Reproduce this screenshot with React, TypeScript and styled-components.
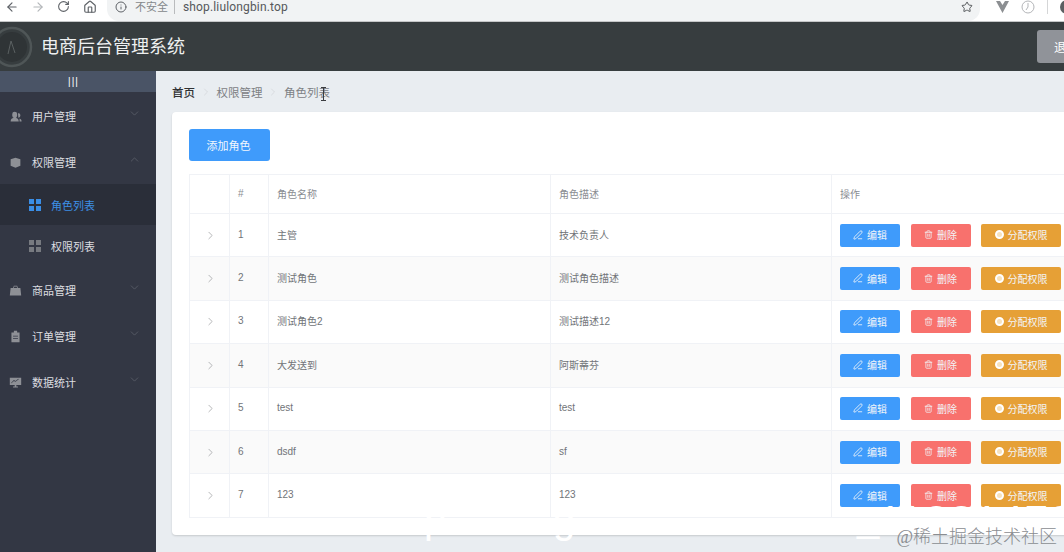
import styled, { createGlobalStyle } from 'styled-components';
import {
  ArrowLeft,
  ArrowRight,
  ChevronDown,
  ChevronRight,
  ChevronUp,
  Home,
  Info,
  PenLine,
  RotateCw,
  Star,
  Trash2,
} from 'lucide-react';

const GlobalStyle = createGlobalStyle`
  html, body {
    margin: 0;
    padding: 0;
    background: #e9edf1;
  }
  body {
    font-family: "Liberation Sans", "Noto Sans CJK SC", sans-serif;
  }
`;

const Page = styled.div`
  position: relative;
  display: flex;
  flex-direction: column;
  width: 1064px;
  height: 552px;
  overflow: hidden;
`;

/* browser chrome */
const ChromeBar = styled.div`
  display: flex;
  align-items: flex-start;
  flex: 0 0 22px;
  box-sizing: border-box;
  padding-left: 5px;
  background: #fff;
  border-bottom: 1px solid #c4c6c7;
  color: #5f6368;
`;
const NavButton = styled.span<{ $muted?: boolean }>`
  display: flex;
  flex: none;
  width: 26px;
  color: ${p => (p.$muted ? '#b4b7ba' : '#5f6368')};
`;
const Omnibox = styled.div`
  display: flex;
  flex: none;
  align-items: center;
  width: 873px;
  height: 21px;
  margin-left: -2px;
  padding: 0 7px 7px 8px;
  box-sizing: border-box;
  background: #f1f3f4;
  border-radius: 0 0 12px 12px;
  font-size: 12px;
`;
const Insecure = styled.span`
  margin-left: 8px;
  padding-right: 6px;
  border-right: 1px solid #b9bbbd;
  color: #85888b;
  font-size: 11px;
  line-height: 14px;
`;
const Address = styled.span`
  margin-left: 8px;
  color: #55585b;
  font-family: "Roboto", "Liberation Sans", sans-serif;
  font-size: 12px;
  letter-spacing: 0.15px;
`;
const StarSlot = styled.span`
  display: flex;
  margin-left: auto;
  color: #55585b;
`;
const Extensions = styled.div`
  display: flex;
  flex: none;
  align-items: center;
  gap: 12px;
  height: 14px;
  margin-left: 16px;
`;
const Divider = styled.span`
  width: 1px;
  height: 14px;
  background: #d5d6d7;
`;
const Avatar = styled.span`
  width: 14px;
  height: 14px;
  border-radius: 50%;
  background: #5c5f62;
`;

/* app header */
const Header = styled.header`
  display: flex;
  align-items: center;
  flex: 0 0 49px;
  background: #373d3f;
`;
const Logo = styled.svg`
  flex: none;
`;
const Title = styled.h1`
  margin: 0 0 0 8px;
  color: #eef0f0;
  font-size: 18px;
  font-weight: 400;
  line-height: 24px;
`;
const LogoutButton = styled.button`
  width: 60px;
  height: 33px;
  margin: 0 -33px 0 auto;
  padding: 0 0 0 17px;
  border: 0;
  border-radius: 3px;
  background: #909399;
  color: #fff;
  font: inherit;
  font-size: 12px;
  text-align: left;
  white-space: nowrap;
`;

const Body = styled.div`
  display: flex;
  flex: 1;
  min-height: 0;
`;

/* sidebar */
const Sidebar = styled.aside`
  flex: 0 0 156px;
  background: #333744;
`;
const Toggle = styled.div`
  height: 21px;
  padding-right: 9px;
  background: #4a5466;
  color: #fff;
  font-size: 10px;
  line-height: 21px;
  letter-spacing: 1px;
  text-align: center;
`;
const MenuList = styled.nav`
  padding-top: 1px;
`;
const MenuRow = styled.div`
  display: flex;
  align-items: center;
  height: 46px;
  padding-left: 9px;
  color: #dcdde0;
  font-size: 11px;
`;
const MenuIcon = styled.svg`
  flex: none;
  margin-right: 10px;
  fill: #8e9096;
`;
const Caret = styled.span`
  display: flex;
  margin: -5px 0 0 auto;
  padding-right: 15px;
  color: #70737c;
`;
const SubList = styled.div`
  margin: -1px 0 1px;
`;
const SubRow = styled.div<{ $active?: boolean }>`
  display: flex;
  align-items: center;
  height: 41px;
  padding-left: 29px;
  background: ${p => (p.$active ? '#2a2e39' : 'transparent')};
  color: ${p => (p.$active ? '#3d8fe6' : '#dcdde0')};
  font-size: 11px;
`;
const SubIcon = styled.span<{ $active?: boolean }>`
  display: grid;
  grid-template-columns: 5px 5px;
  gap: 2px;
  margin-right: 10px;
  i {
    height: 5px;
    background: ${p => (p.$active ? '#3a8ee6' : '#777a80')};
  }
`;

/* main area */
const Main = styled.main`
  flex: 1;
  min-width: 0;
  padding: 0 0 0 16px;
`;
const Breadcrumb = styled.div`
  display: flex;
  align-items: center;
  height: 41px;
  padding-top: 1px;
  box-sizing: border-box;
  color: #7b7e82;
  font-size: 11.5px;
`;
const Crumb = styled.span<{ $strong?: boolean }>`
  color: ${p => (p.$strong ? '#303133' : '#7d8084')};
  font-weight: ${p => (p.$strong ? 500 : 400)};
`;
const CrumbSep = styled.span`
  display: flex;
  margin: 0 4.75px;
  color: #c6c8cc;
`;
const Card = styled.section`
  width: 940px;
  height: 423px;
  padding: 17px 0 0 17px;
  box-sizing: border-box;
  background: #fff;
  border-radius: 4px;
  box-shadow: 0 1px 2px rgba(0, 0, 0, 0.15);
`;
const PrimaryButton = styled.button`
  display: block;
  width: 81px;
  height: 32px;
  padding: 0 2px 1px 0;
  border: 0;
  border-radius: 3px;
  background: #3f9bfb;
  color: #f2f7fd;
  font: inherit;
  font-size: 11px;
`;
const Table = styled.table`
  width: 920px;
  margin-top: 13px;
  border: 1px solid #ebeef5;
  border-collapse: collapse;
  table-layout: fixed;
  color: #717478;
  font-size: 10px;
`;
const HeadRow = styled.tr`
  height: 39px;
  color: #8a8d92;
`;
const Row = styled.tr<{ $striped: boolean }>`
  height: 43.4px;
  background: ${p => (p.$striped ? '#fafafa' : '#fff')};
`;
const Cell = styled.td`
  padding: 0 8px 2px;
  border: 1px solid #f0f2f6;
  font-weight: 400;
  text-align: left;
`;
const HeadCell = styled(Cell).attrs({ as: 'th' })``;
const ExpandCell = styled(Cell)`
  padding: 0 0 0 14px;
  color: #85878b;
  svg {
    display: block;
  }
`;
const ActionCell = styled(Cell)`
  padding: 0 8px;
`;
const Actions = styled.div`
  display: flex;
  gap: 10.5px;
`;
const ActionButton = styled.button<{ $color: string; $wide?: boolean }>`
  display: flex;
  align-items: center;
  justify-content: center;
  gap: 4px;
  width: ${p => (p.$wide ? 80 : 60)}px;
  height: 23px;
  padding: 0 0 1px;
  border: 0;
  border-radius: 2px;
  background: ${p => p.$color};
  color: #f2f5f9;
  font: inherit;
  font-size: 10px;
`;
const Gear = styled.span`
  width: 5px;
  height: 5px;
  border: 2px solid #fff;
  border-radius: 50%;
  background: #f7e2bd;
`;

/* things burnt into the recording: cursor, big caption, watermark */
const TextCursor = styled.svg`
  position: absolute;
  left: 321px;
  top: 87px;
`;
const GhostLetter = styled.span<{ $left: number; $top: number }>`
  position: absolute;
  left: ${p => p.$left}px;
  top: ${p => p.$top}px;
  color: #fff;
  font-family: "Liberation Sans", sans-serif;
  font-size: 40px;
  line-height: 40px;
`;
const GhostDigits = styled.div`
  position: absolute;
  left: 878px;
  top: 504px;
  width: 186px;
  height: 12px;
  overflow: hidden;
  color: #fff;
  font-family: "Liberation Sans", sans-serif;
  font-size: 42px;
  line-height: 34px;
  letter-spacing: 1.6px;
  white-space: nowrap;
`;
const Watermark = styled.div`
  position: absolute;
  right: 7px;
  bottom: 3px;
  color: #8a8d91;
  font-family: "Liberation Serif", "Noto Sans CJK SC", serif;
  font-size: 18px;
  font-weight: 300;
  line-height: 24px;
  white-space: nowrap;
`;

const IconBox = ({ d }: { d: string }) => (
  <MenuIcon width="13" height="13" viewBox="0 0 16 16">
    <path d={d} />
  </MenuIcon>
);

const menuIcons = {
  user: 'M7 2a3 3 0 0 1 3 3v2a3 3 0 0 1-6 0V5a3 3 0 0 1 3-3zM2 14c0-3 2-4 3.500-4.500h3C10 10 12 11 12 14zM11 4a2.500 2.500 0 0 1 3 2.500c0 1.500-1 3-2.500 3zM13 10.500c1.500.5 2.500 1.500 2.500 3.500H13z',
  box: 'M8 2l6 2v8l-6 2.500L2 12V4zM2 5.500l6 2 6-2v1l-6 2-6-2z',
  bag: 'M6 2h4l1 3h3l1 9H1l1-9h3zM6.500 3.200L6 5h4l-.5-1.800z',
  clipboard: 'M6 1h4v2h3v12H3V3h3zM5 7v1h6V7zm0 3v1h6v-1z',
  chart: 'M1 2h14v9H9v2h2v1H5v-1h2v-2H1zm2 7l3-3 2 1 4-3-.5-.5L8 6 6 5 2.500 8.500z',
};

const roles = [
  ['1', '主管', '技术负责人'],
  ['2', '测试角色', '测试角色描述'],
  ['3', '测试角色2', '测试描述12'],
  ['4', '大发送到', '阿斯蒂芬'],
  ['5', 'test', 'test'],
  ['6', 'dsdf', 'sf'],
  ['7', '123', '123'],
];

const MenuItem = ({ icon, label, open }: { icon: string; label: string; open?: boolean }) => (
  <MenuRow>
    <IconBox d={icon} />
    {label}
    <Caret>{open ? <ChevronUp size={13} strokeWidth={1} /> : <ChevronDown size={13} strokeWidth={1} />}</Caret>
  </MenuRow>
);

const SubItem = ({ label, active }: { label: string; active?: boolean }) => (
  <SubRow $active={active}>
    <SubIcon $active={active}>
      <i />
      <i />
      <i />
      <i />
    </SubIcon>
    {label}
  </SubRow>
);

export default function App() {
  return (
    <Page>
      <GlobalStyle />
      <ChromeBar>
        <NavButton>
          <ArrowLeft size={14} />
        </NavButton>
        <NavButton $muted>
          <ArrowRight size={14} />
        </NavButton>
        <NavButton>
          <RotateCw size={13} />
        </NavButton>
        <NavButton>
          <Home size={14} />
        </NavButton>
        <Omnibox>
          <Info size={12} />
          <Insecure>不安全</Insecure>
          <Address>shop.liulongbin.top</Address>
          <StarSlot>
            <Star size={12} />
          </StarSlot>
        </Omnibox>
        <Extensions>
          <svg width="13" height="12" viewBox="0 0 13 12">
            <path d="M0 0h4l2.500 4L9 0h4L6.500 12z" fill="#8c8f92" />
          </svg>
          <svg width="14" height="14" viewBox="0 0 14 14" fill="none" stroke="#b3b5b8">
            <circle cx="7" cy="7" r="6" />
            <path d="M7 3v4L5 10" />
          </svg>
          <Divider />
          <Avatar />
        </Extensions>
      </ChromeBar>
      <Header>
        <Logo width="33" height="49" viewBox="0 0 33 49" fill="none">
          <circle cx="12" cy="25" r="19" stroke="#4f5657" strokeWidth="2.500" />
          <circle cx="12" cy="25" r="15" fill="#2f3436" />
          <path d="M11 19l-3 13M11 19l4 12" stroke="#5a6061" />
        </Logo>
        <Title>电商后台管理系统</Title>
        <LogoutButton>退出</LogoutButton>
      </Header>
      <Body>
        <Sidebar>
          <Toggle>|||</Toggle>
          <MenuList>
            <MenuItem icon={menuIcons.user} label="用户管理" />
            <MenuItem icon={menuIcons.box} label="权限管理" open />
            <SubList>
              <SubItem label="角色列表" active />
              <SubItem label="权限列表" />
            </SubList>
            <MenuItem icon={menuIcons.bag} label="商品管理" />
            <MenuItem icon={menuIcons.clipboard} label="订单管理" />
            <MenuItem icon={menuIcons.chart} label="数据统计" />
          </MenuList>
        </Sidebar>
        <Main>
          <Breadcrumb>
            <Crumb $strong>首页</Crumb>
            <CrumbSep>
              <ChevronRight size={12} strokeWidth={1} />
            </CrumbSep>
            <Crumb>权限管理</Crumb>
            <CrumbSep>
              <ChevronRight size={12} strokeWidth={1} />
            </CrumbSep>
            <Crumb>角色列表</Crumb>
          </Breadcrumb>
          <Card>
            <PrimaryButton>添加角色</PrimaryButton>
            <Table>
              <colgroup>
                <col width="40" />
                <col width="39" />
                <col width="282" />
                <col width="281" />
                <col />
              </colgroup>
              <thead>
                <HeadRow>
                  <HeadCell />
                  <HeadCell>#</HeadCell>
                  <HeadCell>角色名称</HeadCell>
                  <HeadCell>角色描述</HeadCell>
                  <HeadCell>操作</HeadCell>
                </HeadRow>
              </thead>
              <tbody>
                {roles.map(([id, name, desc], i) => (
                  <Row key={id} $striped={i % 2 === 1}>
                    <ExpandCell>
                      <ChevronRight size={13} strokeWidth={1.1} />
                    </ExpandCell>
                    <Cell>{id}</Cell>
                    <Cell>{name}</Cell>
                    <Cell>{desc}</Cell>
                    <ActionCell>
                      <Actions>
                        <ActionButton $color="#3f9bfb">
                          <PenLine size={10} />
                          编辑
                        </ActionButton>
                        <ActionButton $color="#f8716d">
                          <Trash2 size={9} />
                          删除
                        </ActionButton>
                        <ActionButton $color="#e6a036" $wide>
                          <Gear />
                          分配权限
                        </ActionButton>
                      </Actions>
                    </ActionCell>
                  </Row>
                ))}
              </tbody>
            </Table>
          </Card>
        </Main>
      </Body>
      <TextCursor width="5" height="14" viewBox="0 0 5 14" fill="none" stroke="#3b3d40">
        <path d="M0 .5h5M0 13.500h5M2.500 .5v13" />
      </TextCursor>
      <GhostLetter $left={424} $top={499}>p</GhostLetter>
      <GhostLetter $left={553} $top={499}>g</GhostLetter>
      <GhostLetter $left={857} $top={497}>_</GhostLetter>
      <GhostDigits>11881478</GhostDigits>
      <Watermark>@稀土掘金技术社区</Watermark>
    </Page>
  );
}
